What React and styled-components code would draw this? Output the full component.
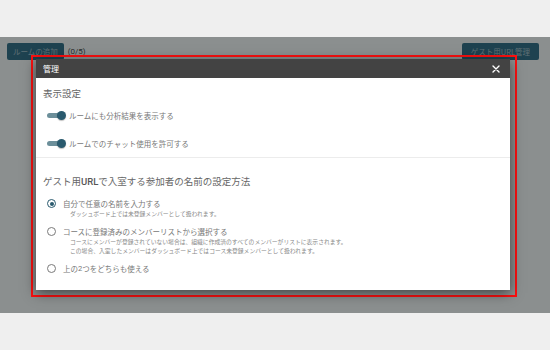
import React from 'react'
import styled, { createGlobalStyle } from 'styled-components'

const Global = createGlobalStyle`
    html, body {
        margin: 0;
        padding: 0;
        background: #efefef;
    }
    body {
        font-family: "Noto Sans CJK JP", "Roboto", sans-serif;
    }
`
const Page = styled.div`
    width: 550px;
    height: 350px;
    display: flex;
    flex-direction: column;
    overflow: hidden;
`
const TopStrip = styled.div`
    height: 37px;
    background: #efefef;
`
const BottomStrip = styled.div`
    flex: 1;
    background: #efefef;
`
const Content = styled.div`
    position: relative;
    height: 276px;
    background: #eff7f6;
`
const Toolbar = styled.div`
    display: flex;
    align-items: center;
    padding: 6px 11px 0 7px;
`
const ToolBtn = styled.div`
    height: 17px;
    padding: 0 ${p => p.$pad}px;
    display: flex;
    align-items: center;
    border-radius: 2px;
    background: #34738a;
    color: rgba(255,255,255,0.55);
    font-size: 7.5px;
    margin-left: ${p => p.$right ? 'auto' : '0'};
`
const Count = styled.span`
    margin-left: 4px;
    font-family: "Roboto", sans-serif;
    font-size: 8px;
    color: #4a4f4f;
`
const Overlay = styled.div`
    position: absolute;
    inset: 0;
    background: rgba(0,0,0,0.42);
`
const Marker = styled.div`
    position: absolute;
    left: 31px;
    top: 18px;
    border: 2px solid #ff1010;
    padding: 2px 5px 5px 3px;
`
const Modal = styled.div`
    width: 474px;
    height: 231px;
    background: #fff;
    box-shadow: 0 3px 12px rgba(0,0,0,0.55);
    display: flex;
    flex-direction: column;
`
const ModalHead = styled.div`
    height: 19px;
    background: #434343;
    display: flex;
    align-items: center;
    justify-content: space-between;
    padding: 0 10px 0 7px;
    color: #fff;
    font-size: 8px;
`
const Section = styled.div`
    padding: ${p => p.$top}px 7px ${p => p.$bottom}px;
    border-bottom: ${p => p.$line ? '1px solid #ececec' : 'none'};
`
const Title = styled.div`
    font-size: 9.5px;
    line-height: 14px;
    color: #666;
    margin-bottom: ${p => p.$gap}px;
`
const Latin = styled.span`
    font-family: "Roboto", sans-serif;
    font-weight: ${p => p.$bold ? 500 : 400};
    color: ${p => p.$bold ? '#555' : 'inherit'};
`
const ToggleRow = styled.div`
    height: 28px;
    display: flex;
    align-items: center;
    padding-left: 4px;
    font-size: 7.5px;
    color: #777;
`
const Switch = styled.div`
    position: relative;
    width: 19px;
    height: 9px;
    margin-right: 3px;
    &::before {
        content: "";
        position: absolute;
        left: 0;
        top: 2px;
        width: 16px;
        height: 5px;
        border-radius: 3px;
        background: #6c8f9a;
    }
    &::after {
        content: "";
        position: absolute;
        right: 0;
        top: 0;
        width: 9px;
        height: 9px;
        border-radius: 50%;
        background: #2a5a6e;
        box-shadow: 0 1px 1px rgba(0,0,0,0.25);
    }
`
const Option = styled.div`
    padding-left: 4px;
    margin-bottom: ${p => p.$gap}px;
`
const OptionLine = styled.div`
    display: flex;
    align-items: center;
    height: 11px;
    font-size: 7.5px;
    color: #777;
`
const Radio = styled.div`
    width: 9px;
    height: 9px;
    box-sizing: border-box;
    border-radius: 50%;
    border: 1.3px solid ${p => p.$on ? '#2a5a6e' : '#7a7a7a'};
    margin-right: 7px;
    display: flex;
    align-items: center;
    justify-content: center;
    &::after {
        content: "";
        width: 4px;
        height: 4px;
        border-radius: 50%;
        background: ${p => p.$on ? '#2a5a6e' : 'transparent'};
    }
`
const Note = styled.div`
    padding-left: 23px;
    font-size: 5.8px;
    line-height: 9px;
    color: #888;
    white-space: nowrap;
`

const Close = () => (
    <svg width="8" height="8" viewBox="0 0 8 8">
        <path d="M1 1L7 7M7 1L1 7" stroke="#fff" strokeWidth="1.4" strokeLinecap="round" />
    </svg>
)

const App = () => {
    const toggles = ['ルームにも分析結果を表示する', 'ルームでのチャット使用を許可する']
    const options = [
        { label: <>自分で任意の名前を入力する</>, on: true, notes: ['ダッシュボード上では未登録メンバーとして扱われます。'] },
        { label: <>コースに登録済みのメンバーリストから選択する</>, on: false, notes: [
            'コースにメンバーが登録されていない場合は、組織に作成済のすべてのメンバーがリストに表示されます。',
            'この場合、入室したメンバーはダッシュボード上ではコース未登録メンバーとして扱われます。',
        ] },
        { label: <>上の<Latin>2</Latin>つをどちらも使える</>, on: false, notes: [] },
    ]
  return (
    <Page>
        <Global />
        <TopStrip />
        <Content>
            <Toolbar>
                <ToolBtn $pad={6}>ルームの追加</ToolBtn>
                <Count>(0/5)</Count>
                <ToolBtn $pad={9} $right>ゲスト用URL管理</ToolBtn>
            </Toolbar>
            <Overlay>
                <Marker>
                    <Modal>
                        <ModalHead>
                            <span>管理</span>
                            <Close />
                        </ModalHead>
                        <Section $top={8} $bottom={0} $line>
                            <Title $gap={1}>表示設定</Title>
                            {toggles.map(t => (
                                <ToggleRow key={t}>
                                    <Switch />
                                    {t}
                                </ToggleRow>
                            ))}
                        </Section>
                        <Section $top={16} $bottom={0}>
                            <Title $gap={9}>ゲスト用<Latin $bold>URL</Latin>で入室する参加者の名前の設定方法</Title>
                            {options.map((o, i) => (
                                <Option key={i} $gap={i < 2 ? 8 : 0}>
                                    <OptionLine>
                                        <Radio $on={o.on} />
                                        {o.label}
                                    </OptionLine>
                                    {o.notes.map(n => <Note key={n}>{n}</Note>)}
                                </Option>
                            ))}
                        </Section>
                    </Modal>
                </Marker>
            </Overlay>
        </Content>
        <BottomStrip />
    </Page>
  )
}

export default App
